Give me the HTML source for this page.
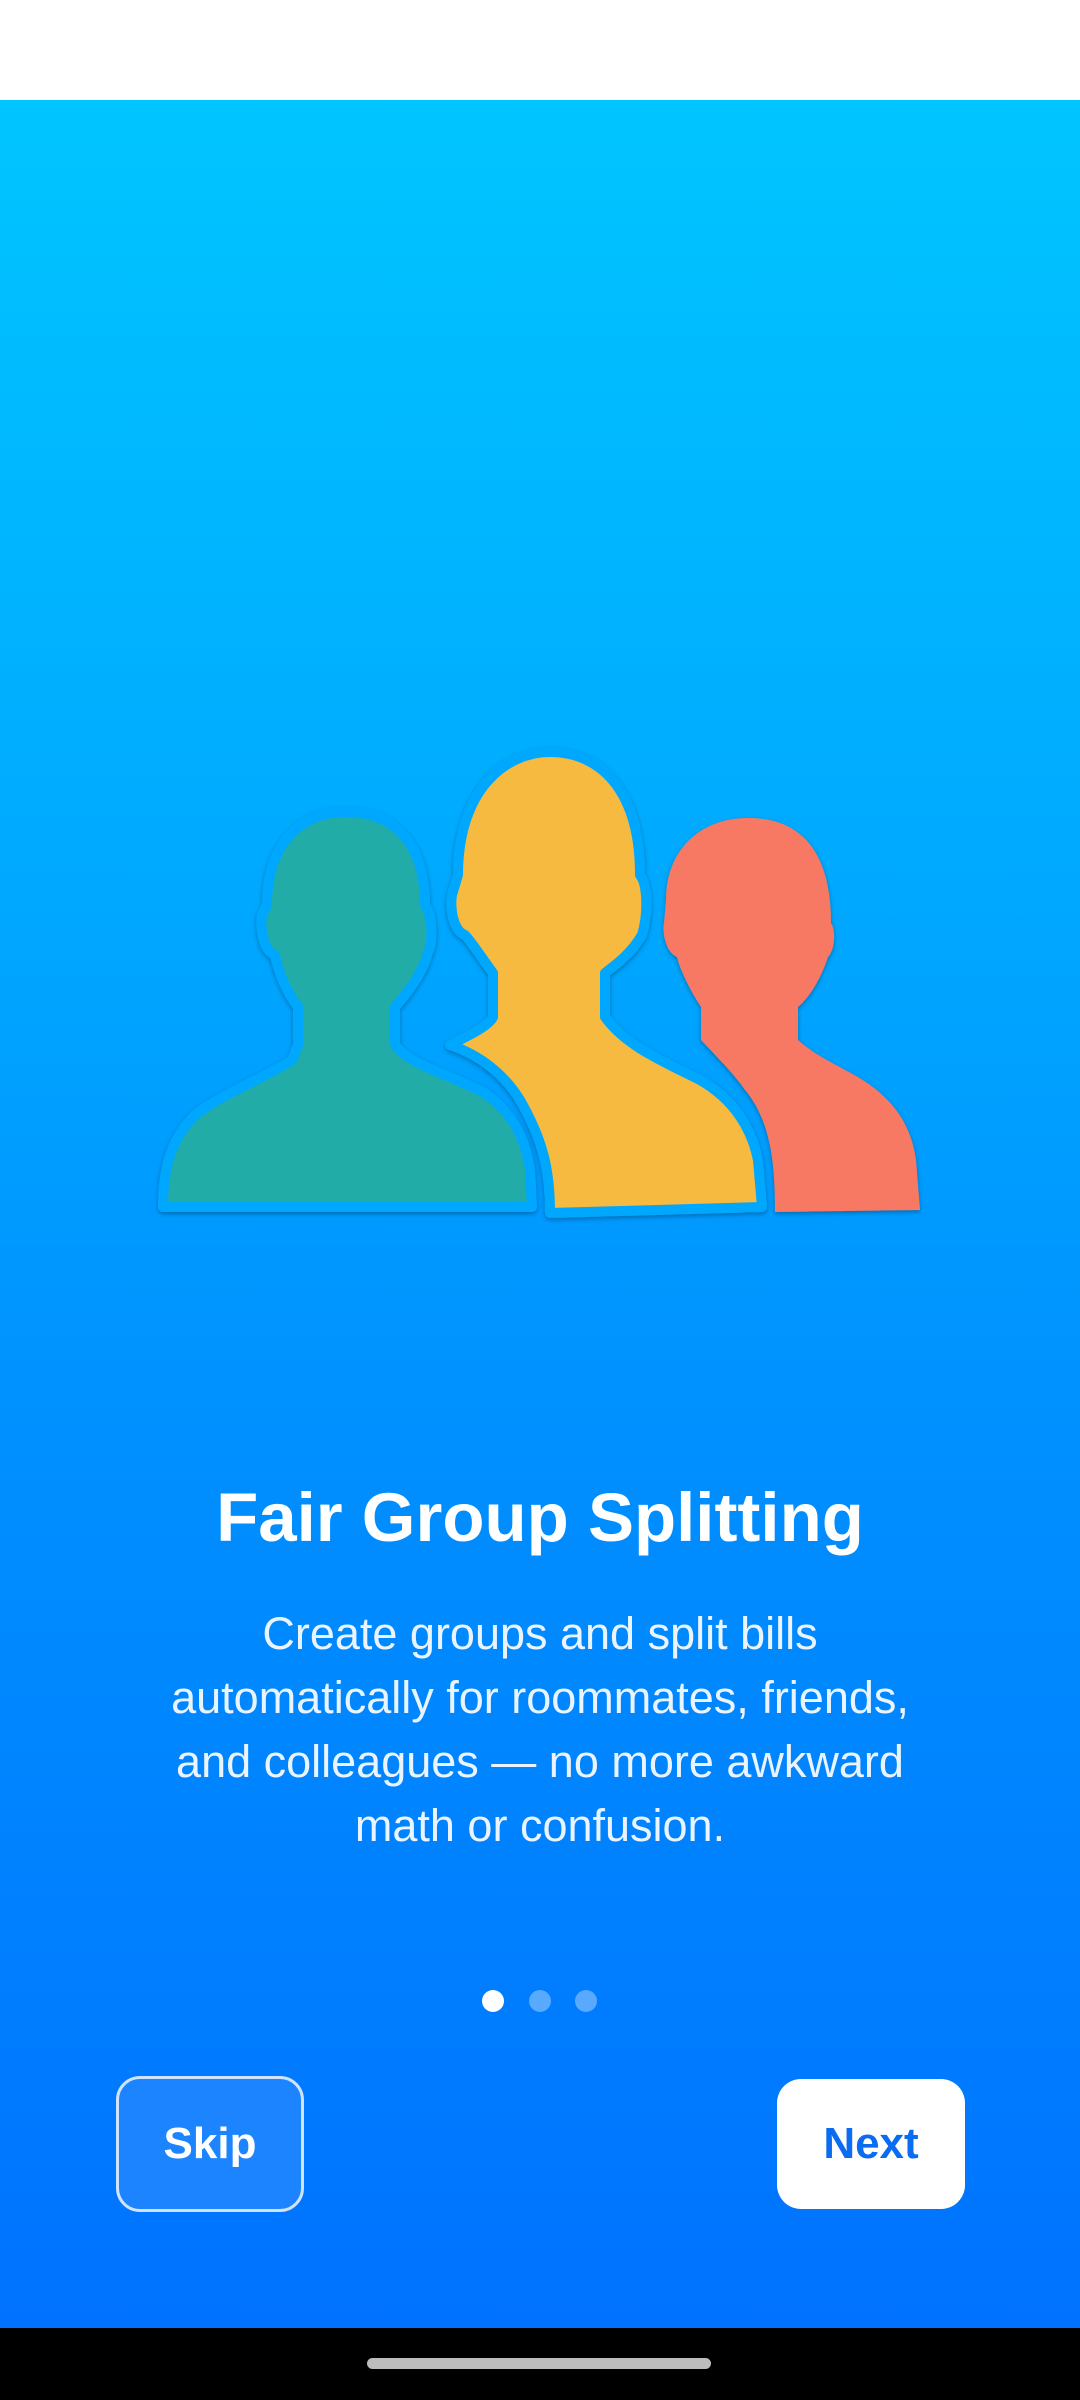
<!DOCTYPE html>
<html><head><meta charset="utf-8"><style>
*{margin:0;padding:0;box-sizing:border-box}
body{width:1080px;height:2400px;position:relative;overflow:hidden;background:#fff;font-family:"Liberation Sans",sans-serif}
.bg{position:absolute;left:0;top:100px;width:1080px;height:2228px;background:linear-gradient(#00c5ff 0%,#00a9ff 35%,#0090ff 60%,#0072ff 100%)}
.nav{position:absolute;left:0;top:2328px;width:1080px;height:72px;background:#000}
.pill{position:absolute;left:367px;top:2358px;width:344px;height:11px;border-radius:6px;background:#bdbdbd}
h1{position:absolute;top:1478px;width:1080px;text-align:center;color:#fff;font-size:69px;font-weight:bold}
p{position:absolute;top:1602px;left:150px;width:780px;text-align:center;color:#eaf4ff;font-size:45px;line-height:64px}
.dot{position:absolute;top:1990px;width:22px;height:22px;border-radius:50%;background:rgba(255,255,255,.35)}
.btn{position:absolute;display:flex;align-items:center;justify-content:center;font-weight:bold;font-size:44px;border-radius:24px}
</style></head><body>
<div class="bg"></div>
<svg style="position:absolute;left:0;top:0" width="1080" height="2400">
<defs><filter id="s"><feDropShadow dx="0" dy="2" stdDeviation="2.5" flood-opacity=".3"/></filter></defs>
<g filter="url(#s)" stroke="#00a7ff" stroke-linejoin="round">
<path stroke-width="0" fill="#f77963" d="M775,1212 C775,1160 770,1120 745,1090 C735,1075 715,1055 701,1040 L701,1007 C690,990 680,970 677,957 C665,952 662,930 664,923 L666,900 C666,850 700,818 748,818 C800,818 831,850 831,923 C836,930 835,950 828,957 C822,975 812,995 798,1007 L798,1040 C820,1060 850,1070 870,1085 C898,1105 912,1130 916,1160 L920,1210 Z"/>
<path stroke-width="10" fill="#f6ba40" d="M550,1213 C550,1170 543,1140 520,1100 C505,1075 480,1055 450,1045 C470,1035 490,1025 493,1017 L493,973 C480,955 470,940 465,935 C452,930 450,905 452,895 L458,875 C458,790 505,752 550,752 C600,752 640,790 640,875 C648,885 648,915 642,935 C630,955 615,965 605,973 L605,1017 C625,1045 660,1060 700,1080 C735,1100 752,1130 758,1160 L762,1207 Z"/>
<path stroke-width="10" fill="#21aca7" d="M163,1207 C163,1170 170,1140 195,1115 C220,1095 270,1075 292,1060 L298,1045 L298,1007 C285,990 278,970 275,955 C262,950 260,925 262,915 L267,905 C267,850 295,812 346,812 C400,812 425,850 425,905 C433,915 433,945 428,952 C424,970 410,990 395,1007 L395,1045 C410,1065 450,1075 483,1092 C510,1110 525,1135 530,1170 L532,1207 Z"/>
</g></svg>
<h1>Fair Group Splitting</h1>
<p>Create groups and split bills automatically for roommates, friends, and colleagues — no more awkward math or confusion.</p>
<div class="dot" style="left:482px;background:#fff"></div>
<div class="dot" style="left:529px"></div>
<div class="dot" style="left:575px"></div>
<div class="btn" style="left:116px;top:2076px;width:188px;height:136px;background:#1d84ff;border:3px solid #cfe3ff;color:#fff">Skip</div>
<div class="btn" style="left:777px;top:2079px;width:188px;height:130px;background:#fff;color:#0a6cf0">Next</div>
<div class="nav"></div><div class="pill"></div>
</body></html>
